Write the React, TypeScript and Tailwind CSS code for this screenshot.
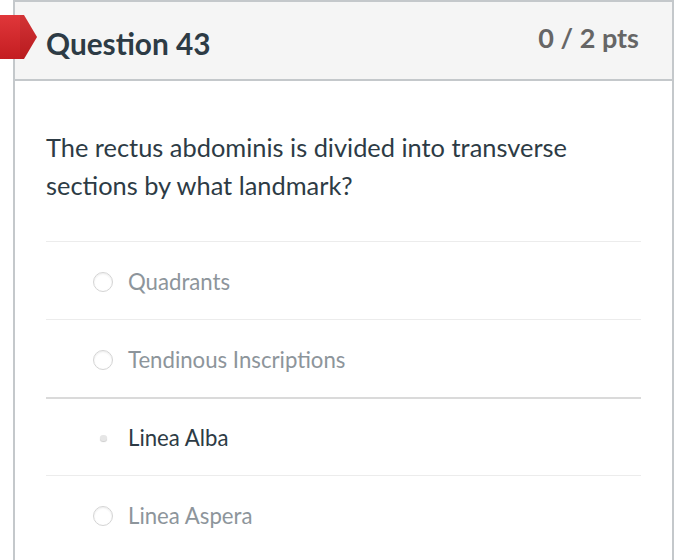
import React from "react";

const answers = [
  { label: "Quadrants", selected: false },
  { label: "Tendinous Inscriptions", selected: false },
  { label: "Linea Alba", selected: true },
  { label: "Linea Aspera", selected: false },
];

export default function App() {
  return (
    <div className="w-[700px] h-[560px] bg-white overflow-hidden relative" style={{ fontFamily: "Lato, 'Noto Sans', sans-serif" }}>
      <div className="ml-[13px] w-[661px] h-[580px] border-x-2 border-t-2 border-[#c4c8cb] flex flex-col">
        <div className="h-[79px] bg-[#f5f5f5] border-b-2 border-[#c4c8cb] flex items-start justify-between pl-[31px] pr-[33px] shrink-0">
          <div className="mt-[24px] text-[29.8px] font-bold text-[#2d3b45] leading-[36px]">Question 43</div>
          <div className="mt-[19px] text-[27px] font-bold text-[#666666] leading-[34px]">0 / 2 pts</div>
        </div>
        <div className="pl-[31px] pr-[31px]">
          <div className="pt-[47px] pb-[37px] text-[25.4px] leading-[38px] text-[#2d3b45] whitespace-nowrap">
            The rectus abdominis is divided into transverse<br />sections by what landmark?
          </div>
          <div className="w-[595px]">
            {answers.map((a, i) => (
              <div
                key={a.label}
                className={`h-[78px] flex items-center pl-[47px] pt-[2px] border-t ${i === 2 ? "border-[#dadada] border-t-2" : "border-[#ececec]"}`}
              >
                <div className="w-[20px] h-[20px] flex items-center justify-center">
                  {a.selected ? (
                    <div className="w-[7px] h-[6px] rounded-full bg-[#e6e6e6] shadow-[0_1px_1px_rgba(0,0,0,0.2)]" />
                  ) : (
                    <div className="w-[20px] h-[20px] rounded-full border border-[#d4d4d4] bg-white shadow-[inset_0_1px_2px_rgba(0,0,0,0.08)]" />
                  )}
                </div>
                <div className={`ml-[15px] text-[22.2px] ${a.selected ? "text-[#2d3b45]" : "text-[#8d959b]"}`}>{a.label}</div>
              </div>
            ))}
          </div>
        </div>
      </div>
      <svg className="absolute left-0 top-[15px]" width="38" height="44" viewBox="0 0 38 44">
        <defs>
          <linearGradient id="rg" x1="0" y1="0" x2="0" y2="1">
            <stop offset="0" stopColor="#e0373a" />
            <stop offset="1" stopColor="#c41d21" />
          </linearGradient>
        </defs>
        <path d="M0 0 H24 L37 22 L24 44 H0 Z" fill="url(#rg)" />
        <path d="M20 0 H24 L37 22 L24 44 H20 Z" fill="#000" opacity="0.06" />
      </svg>
    </div>
  );
}
